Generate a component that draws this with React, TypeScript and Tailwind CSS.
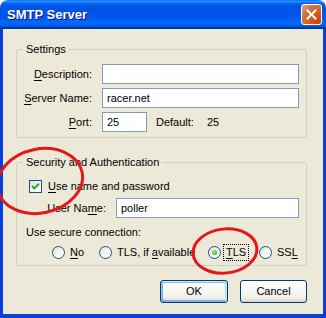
import React from 'react';

const font = "font-['Liberation_Sans','Arial',sans-serif]";

function U({ children }: { children: React.ReactNode }) {
  return <span className="underline underline-offset-[2px]">{children}</span>;
}

function TextBox({ value, className }: { value?: string; className?: string }) {
  return (
    <div
      className={`h-[20px] border border-[#7F9DB9] bg-white pl-[4px] leading-[18px] text-black ${className ?? ''}`}
    >
      {value}
    </div>
  );
}

function Radio({ checked }: { checked?: boolean }) {
  return (
    <span className="flex h-[13px] w-[13px] shrink-0 items-center justify-center rounded-full border border-[#1C5180] bg-[linear-gradient(135deg,#DCDCD7_0%,#F5F5F2_50%,#FFFFFF_100%)]">
      {checked && (
        <span className="h-[5px] w-[5px] rounded-full bg-[radial-gradient(circle_at_40%_40%,#B8F0A8_0%,#55D13A_45%,#21A121_100%)]" />
      )}
    </span>
  );
}

function Group({ title, children, className }: { title: string; children: React.ReactNode; className?: string }) {
  return (
    <fieldset className={`ml-[13px] mr-[16px] rounded-[3px] border border-[#D0D0BF] p-0 ${className ?? ''}`}>
      <legend className="ml-[6px] px-[3px] leading-[13px] text-black">{title}</legend>
      {children}
    </fieldset>
  );
}

export default function App() {
  return (
    <div className={`relative h-[318px] w-[326px] select-none text-[11px] ${font}`}>
      <div className="flex h-full flex-col overflow-hidden rounded-t-[8px]">
        {/* Title bar */}
        <div className="flex h-[29px] shrink-0 items-center justify-between bg-[linear-gradient(to_bottom,#0058ee_0%,#3593ff_4%,#288eff_6%,#127dff_8%,#036ffc_10%,#0262ee_14%,#0057e5_20%,#0054e3_24%,#0055eb_56%,#005bf5_66%,#026afe_76%,#0062ef_86%,#0052d6_92%,#0040ab_94%,#003092_100%)] pl-[7px] pr-[4px]">
          <span className="text-[13px] font-bold leading-none text-white [text-shadow:1px_1px_#0F1089]">
            SMTP Server
          </span>
          <span className="flex h-[21px] w-[21px] items-center justify-center rounded-[3px] border border-white bg-[radial-gradient(circle_at_90%_90%,#CC4600_0%,#DC6527_55%,#CD7546_70%,#E8A48A_100%)]">
            <svg width="13" height="13" viewBox="0 0 13 13">
              <path d="M2.5 2.5 L10.5 10.5 M10.5 2.5 L2.5 10.5" stroke="white" strokeWidth="2" strokeLinecap="square" />
            </svg>
          </span>
        </div>

        {/* Frame + client */}
        <div className="flex flex-1 flex-col bg-[#0841D9] px-[3px] pb-[4px]">
          <div className="flex flex-1 flex-col bg-[#ECE9D8] text-black">
            <Group title="Settings" className="mt-[14px]">
              <div className="grid grid-cols-[75px_1fr] gap-x-[10px] gap-y-[4px] pb-[5px] pl-0 pr-[7px] pt-[8px]">
                <span className="self-center text-right leading-[13px]">
                  <U>D</U>escription:
                </span>
                <TextBox />
                <span className="self-center text-right leading-[13px]">
                  <U>S</U>erver Name:
                </span>
                <TextBox value="racer.net" />
                <span className="self-center text-right leading-[13px]">
                  <U>P</U>ort:
                </span>
                <div className="flex items-center">
                  <TextBox value="25" className="w-[45px]" />
                  <span className="ml-[9px] w-[51px]">Default:</span>
                  <span>25</span>
                </div>
              </div>
            </Group>

            <Group title="Security and Authentication" className="mt-[18px]">
              <div className="flex flex-col pb-[6px] pr-[7px] pt-[11px]">
                <div className="flex h-[13px] items-center pl-[12px]">
                  <span className="flex h-[13px] w-[13px] items-center justify-center border border-[#1C5180] bg-[linear-gradient(135deg,#DCDCD7_0%,#F5F5F2_50%,#FFFFFF_100%)]">
                    <svg width="11" height="11" viewBox="0 0 11 11">
                      <path d="M2 5 L4.3 7.4 L9 2.6" fill="none" stroke="#21A121" strokeWidth="2" />
                    </svg>
                  </span>
                  <span className="ml-[6px] leading-[13px]">
                    <U>U</U>se name and password
                  </span>
                </div>
                <div className="mt-[5px] flex items-center">
                  <span className="w-[89px] text-right leading-[13px]">
                    User Na<U>m</U>e:
                  </span>
                  <TextBox value="poller" className="ml-[10px] flex-1" />
                </div>
                <div className="mt-[8px] pl-[9px] leading-[13px]">Use secure connection:</div>
                <div className="mt-[7px] flex h-[13px] items-center pl-[35px] leading-[13px]">
                  <div className="flex w-[47px] items-center gap-[5px]">
                    <Radio />
                    <span>
                      <U>N</U>o
                    </span>
                  </div>
                  <div className="flex w-[109px] items-center gap-[5px]">
                    <Radio />
                    <span>
                      TLS, if <U>a</U>vailable
                    </span>
                  </div>
                  <div className="flex w-[51px] items-center gap-[2px]">
                    <Radio checked />
                    <span className="border border-dotted border-black px-[2px] leading-[15px]">
                      <U>T</U>LS
                    </span>
                  </div>
                  <div className="flex items-center gap-[5px]">
                    <Radio />
                    <span>
                      SS<U>L</U>
                    </span>
                  </div>
                </div>
              </div>
            </Group>

            <div className="mr-[16px] mt-[14px] flex justify-end gap-[12px]">
              <button className="h-[23px] w-[68px] rounded-[3px] border border-[#003C74] bg-[linear-gradient(to_bottom,#FFFFFF_0%,#F0F0EA_80%,#D6D0C5_100%)] text-black shadow-[inset_-1px_1px_#CEE7FF,inset_1px_2px_#98B8EA,inset_-2px_2px_#BCD4F6,inset_1px_-1px_#89ADE4,inset_2px_-2px_#89ADE4]">
                OK
              </button>
              <button className="h-[23px] w-[67px] rounded-[3px] border border-[#003C74] bg-[linear-gradient(to_bottom,#FFFFFF_0%,#F0F0EA_80%,#D6D0C5_100%)] text-black">
                Cancel
              </button>
            </div>
          </div>
        </div>
      </div>

      {/* red annotation circles */}
      <svg className="pointer-events-none absolute inset-0" width="326" height="318" viewBox="0 0 326 318">
        <ellipse cx="40" cy="181" rx="43" ry="32" transform="rotate(-12 40 181)" fill="none" stroke="#E5161C" strokeWidth="3" />
        <ellipse cx="225" cy="251" rx="32" ry="22" transform="rotate(-6 225 251)" fill="none" stroke="#E5161C" strokeWidth="3" />
      </svg>
    </div>
  );
}
